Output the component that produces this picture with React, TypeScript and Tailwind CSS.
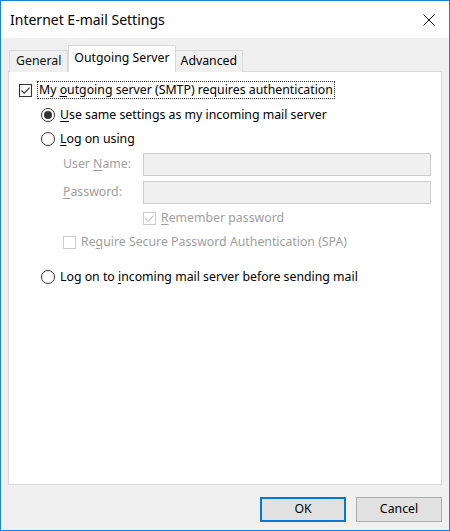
import React from "react";

const font = { fontFamily: '"Noto Sans", "Open Sans", sans-serif' };

function Check({ checked, disabled }: { checked?: boolean; disabled?: boolean }) {
  return (
    <span
      className={`flex h-[13px] w-[13px] shrink-0 items-center justify-center border bg-white ${
        disabled ? "border-[#cccccc]" : "border-[#333333]"
      }`}
    >
      {checked && (
        <svg width="11" height="11" viewBox="0 0 11 11">
          <path
            d="M1.5 5.5 L4.2 8.2 L9.6 2.6"
            fill="none"
            stroke={disabled ? "#c4c4c4" : "#333333"}
            strokeWidth="1.1"
          />
        </svg>
      )}
    </span>
  );
}

function Radio({ checked }: { checked?: boolean }) {
  return (
    <span className="flex h-[14px] w-[14px] shrink-0 items-center justify-center rounded-full border border-[#333333] bg-white">
      {checked && <span className="h-[8px] w-[8px] rounded-full bg-[#333333]" />}
    </span>
  );
}

export default function App() {
  return (
    <div
      className="flex h-[531px] w-[450px] flex-col border border-[#1883d7] bg-[#f0f0f0] text-[12.3px] text-black"
      style={font}
    >
      {/* Title bar */}
      <div className="flex h-[37px] shrink-0 items-center justify-between bg-white pl-[9px] pr-[14px]">
        <span className="text-[14px] text-black">Internet E-mail Settings</span>
        <svg width="12" height="12" viewBox="0 0 12 12" className="mt-[1px]">
          <path d="M0.5 0.5 L11.5 11.5 M11.5 0.5 L0.5 11.5" stroke="#111" strokeWidth="1" fill="none" />
        </svg>
      </div>

      <div className="flex flex-1 flex-col px-[7px] pt-[7px]">
        {/* Tabs */}
        <div className="relative z-10 flex h-[26px] items-end pl-[1px]">
          <div className="mb-[-1px] flex h-[22px] items-center border border-b-0 border-[#d9d9d9] bg-[#f0f0f0] px-[6px] text-[#111]">
            General
          </div>
          <div className="mb-[-1px] flex h-[27px] items-start border border-b-0 border-[#d9d9d9] bg-white px-[5px] pt-[3px]">
            Outgoing Server
          </div>
          <div className="mb-[-1px] flex h-[22px] items-center border border-b-0 border-l-0 border-[#d9d9d9] bg-[#f0f0f0] px-[5px]">
            Advanced
          </div>
        </div>

        {/* Panel */}
        <div className="flex h-[414px] flex-col border border-[#d9d9d9] bg-white pl-[10px] pr-[9px] pt-[6px]">
          <div className="flex h-[24px] items-center gap-[5px]">
            <Check checked />
            <span className="border border-dotted border-[#333] px-[1px] leading-[16px]">
              My <u className="underline-offset-2">o</u>utgoing server (SMTP) requires authentication
            </span>
          </div>

          <div className="mt-[1px] flex h-[24px] items-center gap-[5px] pl-[22px]">
            <Radio checked />
            <span>
              <u className="underline-offset-2">U</u>se same settings as my incoming mail server
            </span>
          </div>

          <div className="flex h-[24px] items-center gap-[5px] pl-[22px]">
            <Radio />
            <span>
              <u className="underline-offset-2">L</u>og on using
            </span>
          </div>

          <div className="mt-[2px] flex h-[23px] items-center pl-[44px] pr-[1px] text-[#a0a0a0]">
            <span className="w-[80px]">
              User <u className="underline-offset-2">N</u>ame:
            </span>
            <div className="h-[23px] flex-1 border border-[#cccccc] bg-[#f0f0f0]" />
          </div>

          <div className="mt-[5px] flex h-[23px] items-center pl-[44px] pr-[1px] text-[#a0a0a0]">
            <span className="w-[80px]">
              <u className="underline-offset-2">P</u>assword:
            </span>
            <div className="h-[23px] flex-1 border border-[#cccccc] bg-[#f0f0f0]" />
          </div>

          <div className="mt-[2px] flex h-[24px] items-center gap-[5px] pl-[124px] text-[#a0a0a0]">
            <Check checked disabled />
            <span>
              <u className="underline-offset-2">R</u>emember password
            </span>
          </div>

          <div className="flex h-[24px] items-center gap-[5px] pl-[44px] text-[#a0a0a0]">
            <Check disabled />
            <span>
              Re<u className="underline-offset-2">q</u>uire Secure Password Authentication (SPA)
            </span>
          </div>

          <div className="mt-[11px] flex h-[24px] items-center gap-[5px] pl-[22px]">
            <Radio />
            <span>
              Log on to <u className="underline-offset-2">i</u>ncoming mail server before sending mail
            </span>
          </div>
        </div>

        {/* Buttons */}
        <div className="mt-[12px] flex justify-end gap-[10px]">
          <button className="h-[25px] w-[86px] border-2 border-[#0078d7] bg-[#e1e1e1] text-[12.3px]">OK</button>
          <button className="h-[25px] w-[86px] border border-[#adadad] bg-[#e1e1e1] text-[12.3px]">Cancel</button>
        </div>
      </div>
    </div>
  );
}
